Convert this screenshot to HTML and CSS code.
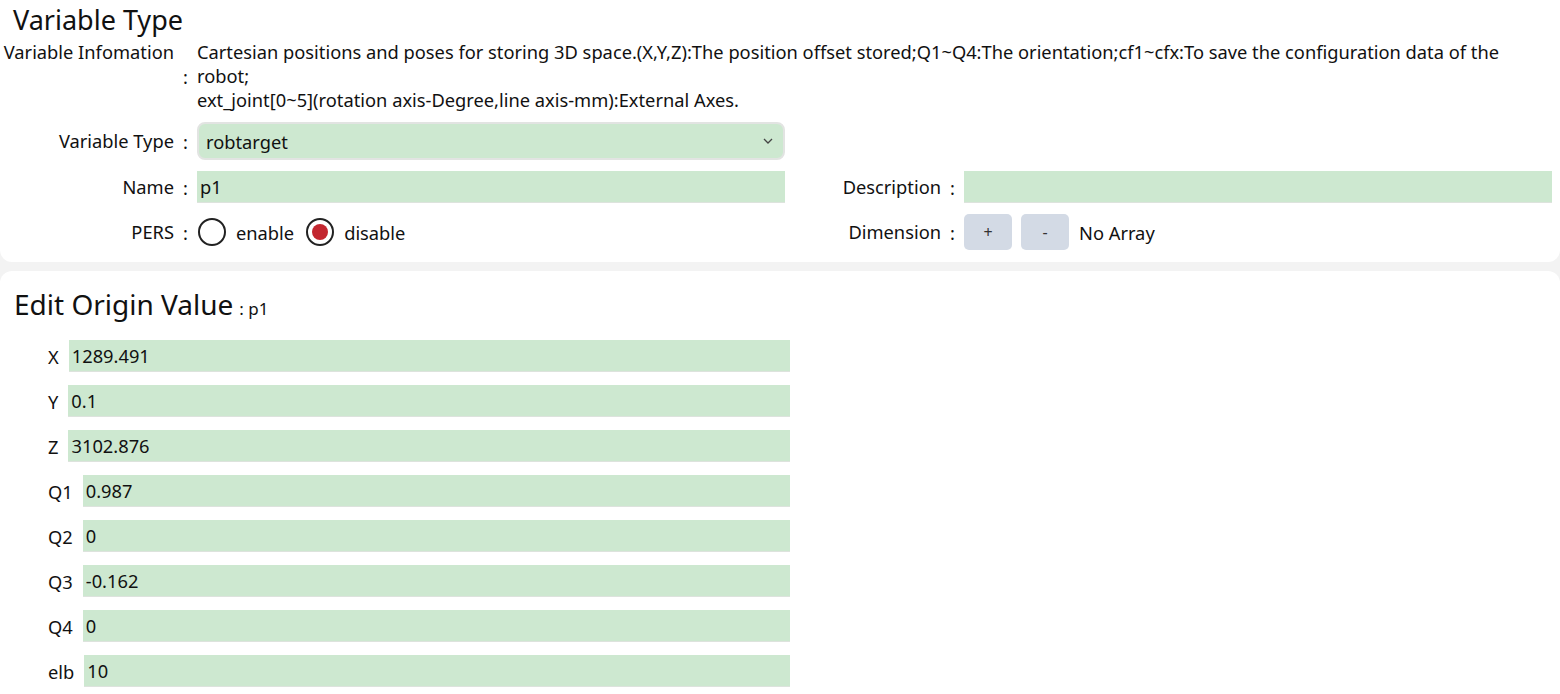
FILE: index.html
```html
<!DOCTYPE html>
<html lang="en">
<head>
    <meta charset="UTF-8">
    <meta name="viewport" content="width=device-width, initial-scale=1.0">
    <title>Variable</title>
    <link rel="stylesheet" href="styles.css">
</head>
<body>

    <!-- 変数タイプ -->
    <div class="panel top">
        <h2 class="title">Variable Type</h2>

        <div class="row info">
            <div class="label">Variable Infomation</div>
            <div class="colon">:</div>
            <div class="info-text">Cartesian positions and poses for storing 3D space.(X,Y,Z):The position offset stored;Q1~Q4:The orientation;cf1~cfx:To save the configuration data of the robot;<br>ext_joint[0~5](rotation axis-Degree,line axis-mm):External Axes.</div>
        </div>

        <div class="row">
            <div class="label">Variable Type</div>
            <div class="colon">:</div>
            <div class="select">
                <span>robtarget</span>
                <svg width="10" height="6" viewBox="0 0 10 6"><path d="M1 1 L5 5 L9 1" fill="none" stroke="#444" stroke-width="1.3"/></svg>
            </div>
        </div>

        <div class="row">
            <div class="field">
                <div class="label">Name</div>
                <div class="colon">:</div>
                <input class="input" type="text" value="p1">
            </div>
            <div class="field right">
                <div class="label">Description</div>
                <div class="colon">:</div>
                <input class="input" type="text" value="">
            </div>
        </div>

        <div class="row last">
            <div class="field">
                <div class="label">PERS</div>
                <div class="colon">:</div>
                <div class="radios">
                    <span class="radio"></span><span class="radio-text">enable</span>
                    <span class="radio checked"></span><span class="radio-text">disable</span>
                </div>
            </div>
            <div class="field right">
                <div class="label">Dimension</div>
                <div class="colon">:</div>
                <div class="dims">
                    <button class="btn">+</button>
                    <button class="btn">-</button>
                    <span class="no-array">No Array</span>
                </div>
            </div>
        </div>
    </div>

    <!-- 初期値の編集 -->
    <div class="panel bottom">
        <h2 class="title2">Edit Origin Value<span class="sub">: p1</span></h2>

        <div class="values">
            <div class="value-row"><span class="vname">X</span><input class="input" type="text" value="1289.491"></div>
            <div class="value-row"><span class="vname">Y</span><input class="input" type="text" value="0.1"></div>
            <div class="value-row"><span class="vname">Z</span><input class="input" type="text" value="3102.876"></div>
            <div class="value-row"><span class="vname">Q1</span><input class="input" type="text" value="0.987"></div>
            <div class="value-row"><span class="vname">Q2</span><input class="input" type="text" value="0"></div>
            <div class="value-row"><span class="vname">Q3</span><input class="input" type="text" value="-0.162"></div>
            <div class="value-row"><span class="vname">Q4</span><input class="input" type="text" value="0"></div>
            <div class="value-row"><span class="vname">elb</span><input class="input" type="text" value="10"></div>
        </div>
    </div>

</body>
</html>
```

FILE: styles.css
```css
body {
    margin: 0;
    background: #f3f3f3;
    font-family: "Noto Sans", "Open Sans", sans-serif;
    font-size: 18.3px;
    color: #111;
    overflow: hidden;
}

.panel {
    background: #fff;
}

.top {
    border-radius: 0 0 12px 12px;
    padding: 3px 8px 12px 0;
}

.bottom {
    margin-top: 9px;
    border-radius: 12px 12px 0 0;
    padding: 15px 0 11px 0;
}

.title {
    margin: 0 0 3px 13px;
    font-size: 27px;
    font-weight: normal;
    line-height: 34px;
}

.row {
    display: flex;
    align-items: center;
    margin-bottom: 11px;
}

.row.last {
    margin-bottom: 0;
}

.info {
    align-items: stretch;
    margin-bottom: 10px;
}

.info .label {
    align-self: flex-start;
}

.info .colon {
    display: flex;
    align-items: center;
    justify-content: center;
}

.label {
    width: 174px;
    text-align: right;
    line-height: 24px;
    white-space: nowrap;
}

.colon {
    width: 23px;
    text-align: center;
}

.info-text {
    flex: 1;
    line-height: 24px;
}

.field {
    display: flex;
    align-items: center;
    width: 785px;
    flex-shrink: 0;
}

.field.right {
    width: 767px;
}

.field.right .label {
    width: 156px;
}

.input {
    width: 588px;
    height: 32px;
    box-sizing: border-box;
    border: none;
    border-bottom: 1px solid #dde3dd;
    background: #cde8d0;
    padding: 0 3px;
    font-family: inherit;
    font-size: 18.3px;
    color: #111;
    outline: none;
}

.select {
    width: 588px;
    height: 38px;
    box-sizing: border-box;
    border: 2px solid #e2e4e2;
    border-radius: 8px;
    background: #cde8d0;
    display: flex;
    align-items: center;
    justify-content: space-between;
    padding: 0 10px 0 7px;
}

.radios {
    display: flex;
    align-items: center;
}

.radio {
    width: 28px;
    height: 28px;
    box-sizing: border-box;
    border: 2px solid #222;
    border-radius: 50%;
    margin-left: 1px;
    position: relative;
}

.radio.checked::after {
    content: "";
    position: absolute;
    left: 4px;
    top: 4px;
    width: 16px;
    height: 16px;
    border-radius: 50%;
    background: #c3262f;
}

.radio-text {
    margin: 0 11px 0 10px;
}

.dims {
    display: flex;
    align-items: center;
}

.btn {
    width: 48px;
    height: 36px;
    border: none;
    border-radius: 5px;
    background: #d3dae5;
    font-family: inherit;
    font-size: 16px;
    color: #333;
    margin-right: 9px;
}

.no-array {
    margin-left: 1px;
}

.title2 {
    margin: 0 0 13px 14px;
    font-size: 28px;
    font-weight: normal;
    line-height: 36px;
}

.sub {
    font-size: 17px;
    margin-left: 6px;
}

.values {
    width: 742px;
    margin-left: 48px;
}

.value-row {
    display: flex;
    align-items: center;
    margin-bottom: 13px;
}

.value-row:last-child {
    margin-bottom: 0;
}

.vname {
    margin-right: 10px;
}

.value-row .input {
    flex: 1;
    width: auto;
}
```
